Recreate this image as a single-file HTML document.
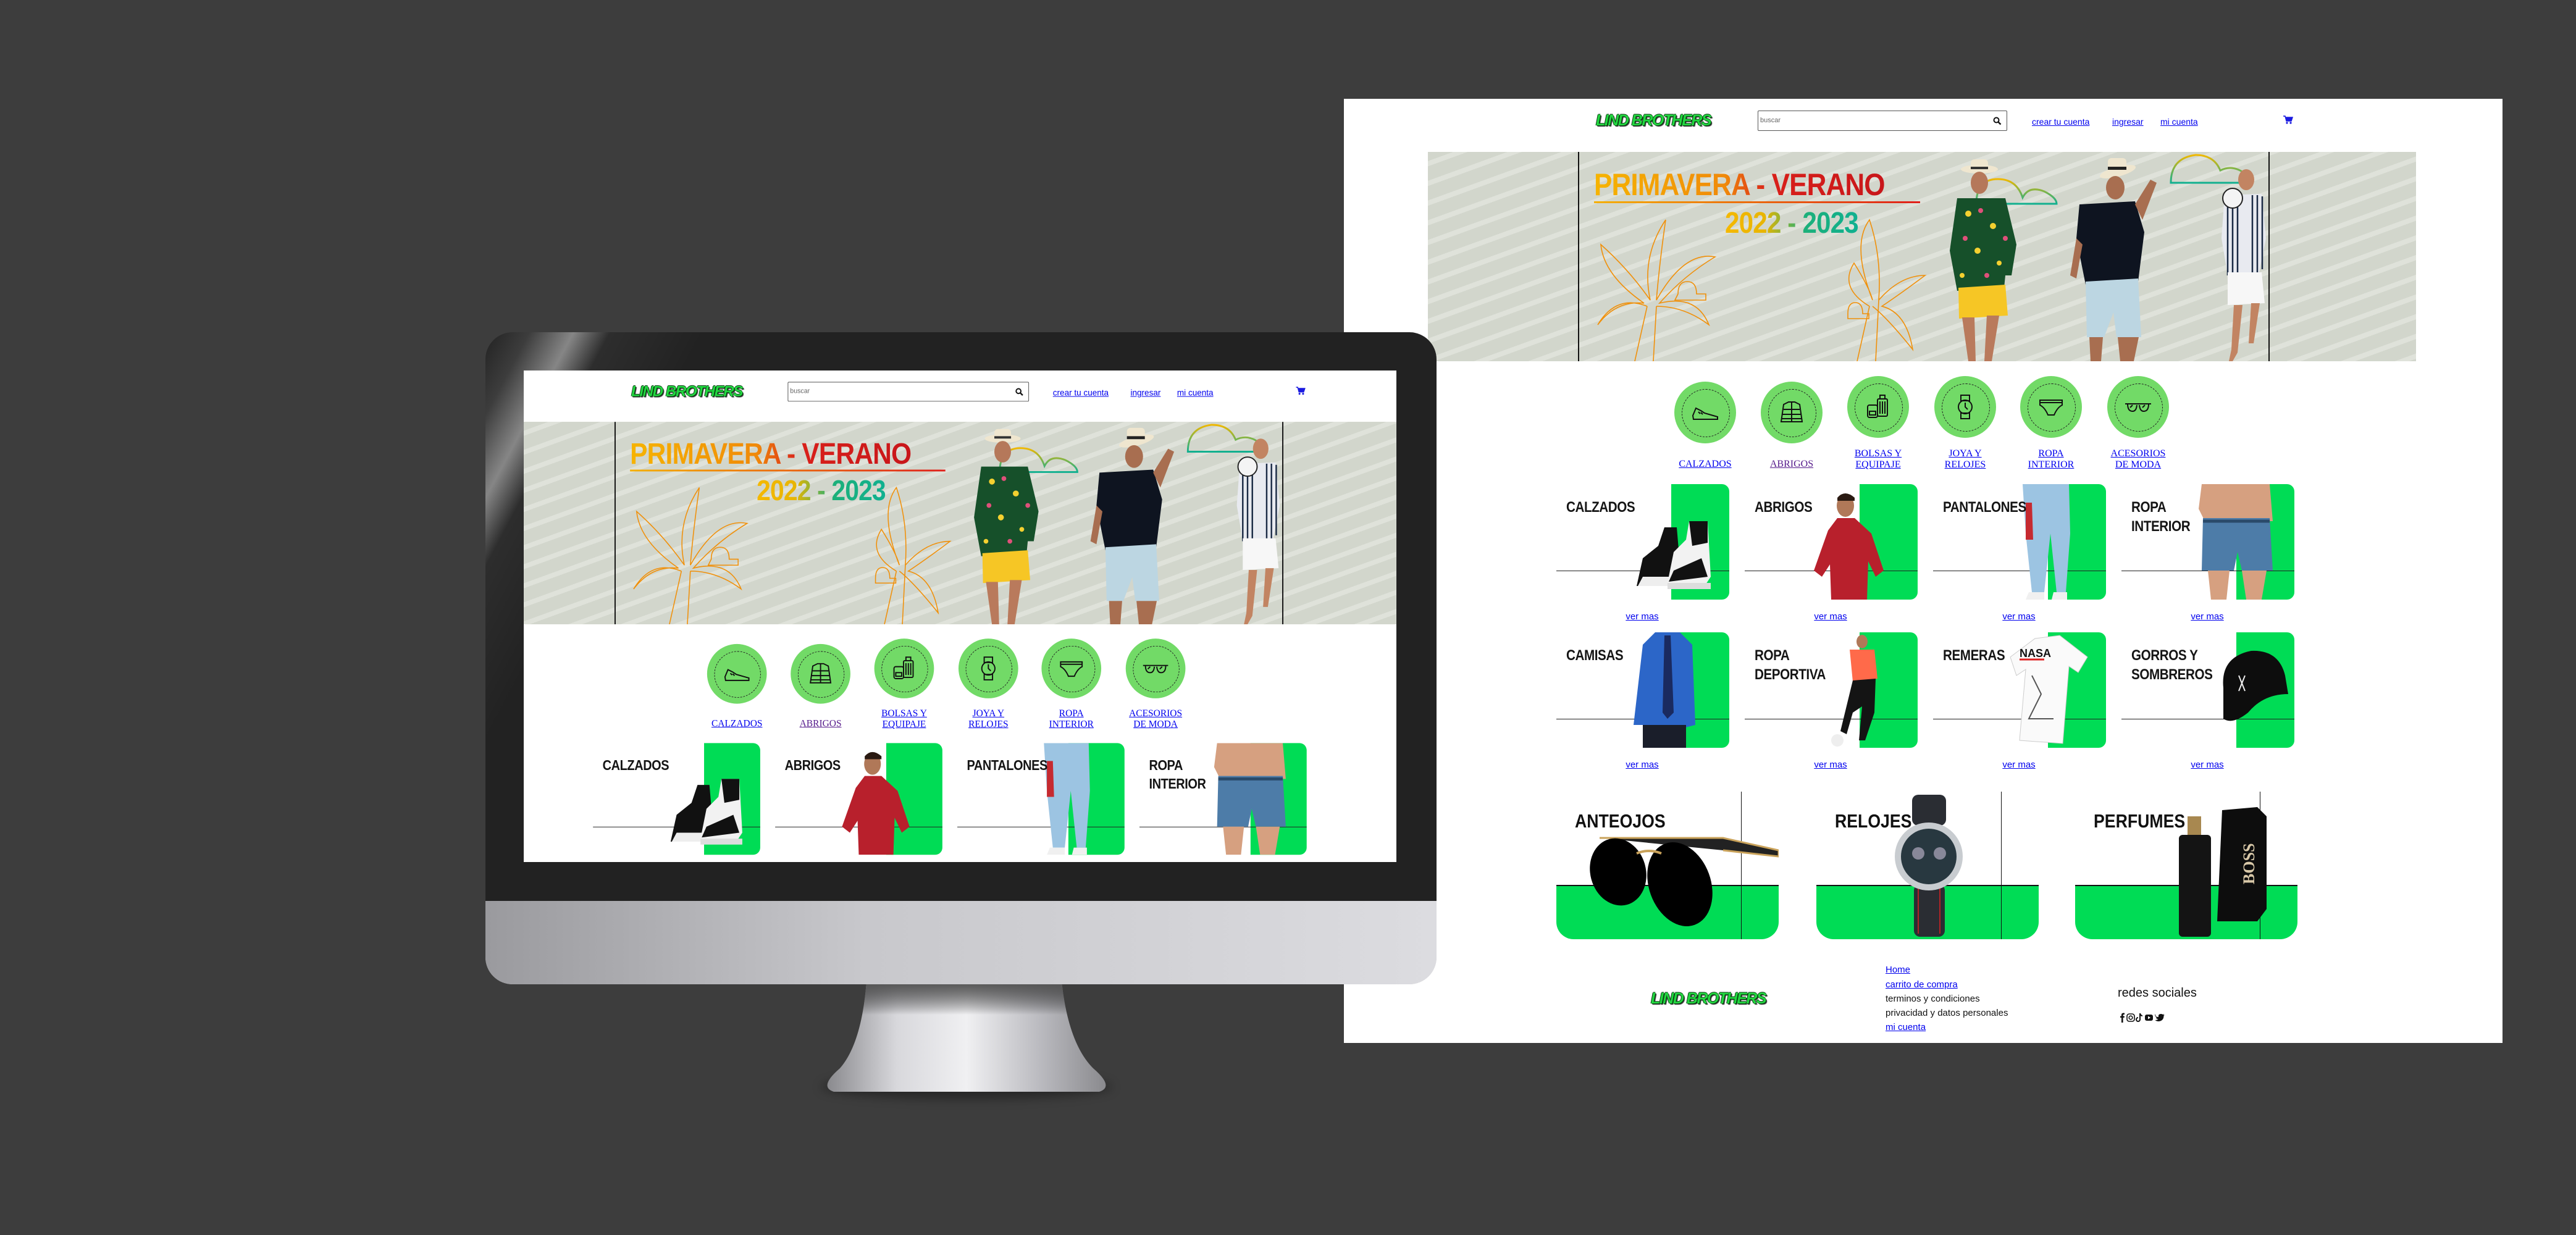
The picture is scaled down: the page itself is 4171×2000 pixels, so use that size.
<!DOCTYPE html>
<html><head><meta charset="utf-8">
<style>
*{margin:0;padding:0;box-sizing:border-box}
body{width:4171px;height:2000px;background:#3d3d3d;position:relative;overflow:hidden;font-family:"Liberation Sans",sans-serif}
.pg{position:absolute;background:#fff;overflow:hidden}
.pg *{position:absolute}
.logo{font-weight:bold;font-style:italic;color:#22d640;font-size:25px;letter-spacing:-1.5px;white-space:nowrap;text-shadow:1px 1px 0 #0a3a12,-1px 0 0 #0a3a12,0 -1px 0 #0a3a12,2px 2px 1px #333}
.srch{border:1px solid #555;border-radius:2px;background:#fff}
.srch span{left:3px;top:9px;font-size:11px;color:#666}
a,.lk{color:#0000ee;text-decoration:underline;white-space:nowrap}
.nav{font-size:14px;top:29px}
.ban{background:#d2d6cc repeating-linear-gradient(160deg,#d2d6cc 0 14px,#dfe2da 14px 22px,#d2d6cc 22px 30px);overflow:hidden}
.inn{top:0;height:100%;width:1120px;border-left:2px solid #111;border-right:2px solid #111}
.ttl{font-weight:bold;font-size:50px;letter-spacing:-1px;white-space:nowrap;background:linear-gradient(90deg,#f6b400,#f08a0a 45%,#d9201a 60%,#c8161a);-webkit-background-clip:text;background-clip:text;color:transparent;transform:scaleX(.88);transform-origin:0 0}
.yr{font-weight:bold;font-size:48px;letter-spacing:-1px;white-space:nowrap;background:linear-gradient(90deg,#f5b800,#e8b500 30%,#1cb07a 60%,#10b090);-webkit-background-clip:text;background-clip:text;color:transparent;transform:scaleX(.88);transform-origin:0 0}
.cir{width:100px;height:100px;border-radius:50%;background:#72da67}
.cir::before{content:"";position:absolute;left:12px;top:12px;width:76px;height:76px;border-radius:50%;border:1.5px dashed #222}
.cir svg{left:25px;top:25px}
.lab{font-family:"Liberation Serif",serif;font-size:16px;line-height:18px;text-align:center;width:120px;color:#0000ee;text-decoration:underline}
.card{width:280px;height:187px}
.card .g{right:0;top:0;width:94px;height:187px;background:#00dc55;border-radius:0 12px 12px 0}
.card .ln{left:0;top:140px;width:280px;height:1px;background:#222}
.card .t{left:16px;top:22px;font-weight:bold;font-size:24px;line-height:31px;color:#151515;letter-spacing:-.5px;white-space:nowrap;transform:scaleX(.86);transform-origin:0 0}
.card svg{left:0;top:0}
.vm{font-size:15px;width:100px;text-align:center}
.big{width:360px;height:239px}
.big .g{left:0;bottom:0;width:360px;height:88px;background:#00dc55;border-radius:0 0 28px 28px;border-top:2px solid #111}
.big .v{left:299px;top:0;width:1px;height:239px;background:#111}
.big .t{left:30px;top:30px;font-weight:bold;font-size:31px;color:#111;white-space:nowrap;transform:scaleX(.86);transform-origin:0 0}
.big svg{left:0;top:0}
.ft{font-size:15px;color:#111;white-space:nowrap}
a.ft{color:#0000ee}
</style></head><body>

<!-- RIGHT PAGE -->
<div class="pg" style="left:2176px;top:160px;width:1876px;height:1529px">
  <div class="logo" style="left:408px;top:21px">LIND BROTHERS</div>
  <div class="srch" style="left:670px;top:19px;width:404px;height:33px"><span>buscar</span>
    <svg style="right:8px;top:9px" width="14" height="14" viewBox="0 0 14 14"><circle cx="5.5" cy="5.5" r="4" fill="none" stroke="#111" stroke-width="2"/><path d="M8.5 8.5l4 4" stroke="#111" stroke-width="2.4"/></svg></div>
  <a class="nav" style="left:1114px">crear tu cuenta</a>
  <a class="nav" style="left:1244px">ingresar</a>
  <a class="nav" style="left:1322px">mi cuenta</a>
  <svg style="left:1521px;top:27px" width="16" height="14" viewBox="0 0 16 14"><path d="M0 1h3l2 8h8l2-6H4" fill="#1a1ae0" stroke="#1a1ae0" stroke-width="1.5"/><circle cx="6" cy="12" r="1.6" fill="#1a1ae0"/><circle cx="12" cy="12" r="1.6" fill="#1a1ae0"/></svg>

  <div class="ban" style="left:136px;top:86px;width:1600px;height:339px">
    <div class="inn" style="left:243px">
      <div class="ttl" style="left:24px;top:24px">PRIMAVERA - VERANO</div>
      <div style="left:24px;top:80px;width:528px;height:3px;background:linear-gradient(90deg,#f5b000,#e01f1a)"></div>
      <div class="yr" style="left:236px;top:88px">2022 - 2023</div>
      <svg style="left:0;top:0" width="1120" height="339" viewBox="0 0 1120 339">
        <g fill="none" stroke="#f0900a" stroke-width="1.6">
          <path d="M90 339 L110 250 M120 339 L125 250 M110 250 Q60 230 30 280 Q60 240 105 245 Q40 200 35 150 Q80 190 115 240 Q100 170 140 110 Q130 180 125 240 Q170 160 220 170 Q170 200 130 245 Q190 230 210 280 Q170 250 125 250"/>
          <path d="M160 230 q0-20 15-20 q15 0 15 20 h15 v10 h-50z"/>
          <path d="M450 339 L470 250 M480 339 L485 240 M470 250 Q420 220 445 180 Q470 220 475 240 Q440 150 470 110 Q490 170 485 240 Q520 200 560 200 Q520 230 490 250 Q530 260 540 320 Q500 270 475 250"/>
          <path d="M435 262 q0-18 12-18 q12 0 12 18 h10 v8 h-34z"/>
        </g>
        <path d="M643 84 q0-40 35-40 q30 0 40 30 q10-20 35-10 q20 10 20 20 v0 h-130z" fill="none" stroke="url(#cg)" stroke-width="3"/>
        <path d="M958 50 q0-40 40-45 q30 0 40 25 q20-10 40 5 q10 10 10 15 h-130z" fill="none" stroke="url(#cg)" stroke-width="3"/>
        <defs><linearGradient id="cg" x1="0" y1="1" x2="0" y2="0"><stop offset="0" stop-color="#10b090"/><stop offset="1" stop-color="#f0b800"/></linearGradient></defs>
        <ellipse cx="648" cy="28" rx="30" ry="7" fill="#efe6cf"/><rect x="634" y="12" width="28" height="16" rx="6" fill="#efe6cf"/><rect x="634" y="24" width="28" height="4" fill="#333"/>
        <ellipse cx="648" cy="50" rx="14" ry="18" fill="#b5785a"/>
        <path d="M612 75 L690 75 L708 150 L700 200 L690 200 L688 220 L612 225 L600 160 Z" fill="#16502a"/>
        <g fill="#f4d030"><circle cx="630" cy="100" r="5"/><circle cx="670" cy="120" r="5"/><circle cx="645" cy="160" r="5"/><circle cx="680" cy="180" r="4"/><circle cx="620" cy="200" r="4"/></g>
        <g fill="#e0507a"><circle cx="650" cy="95" r="4"/><circle cx="625" cy="140" r="4"/><circle cx="690" cy="140" r="4"/><circle cx="660" cy="200" r="4"/></g>
        <path d="M614 220 L690 215 L694 265 L615 270 Z" fill="#f6c625"/>
        <path d="M620 268 L640 268 L642 339 L630 339 Z M660 265 L680 265 L668 339 L656 339 Z" fill="#b97a5c"/>
        <ellipse cx="872" cy="32" rx="30" ry="8" fill="#efe6cf" transform="rotate(-15 872 32)"/><rect x="856" y="10" width="30" height="20" rx="6" fill="#efe6cf"/><rect x="856" y="24" width="30" height="5" fill="#222"/>
        <ellipse cx="868" cy="58" rx="15" ry="19" fill="#a86e50"/>
        <path d="M810 85 L900 80 L915 130 L905 210 L820 215 L805 140 Z" fill="#0e1420"/>
        <path d="M900 85 L925 45 L935 50 L912 110 Z" fill="#a86e50"/>
        <path d="M805 140 L795 200 L805 205 L815 150 Z" fill="#a86e50"/>
        <path d="M820 210 L905 205 L910 300 L870 300 L865 260 L850 300 L822 300 Z" fill="#bcd6e2"/>
        <path d="M826 300 L848 300 L845 339 L828 339 Z M872 300 L906 300 L898 339 L876 339 Z" fill="#a86e50"/>
        <ellipse cx="1080" cy="45" rx="13" ry="17" fill="#c28462"/>
        <path d="M1045 70 L1105 68 L1112 140 L1100 200 L1050 200 L1040 140 Z" fill="#e8eaf0"/>
        <g stroke="#1a2a44" stroke-width="2.5"><path d="M1050 75 V200 M1058 72 V200 M1066 70 V200 M1090 70 V200 M1098 70 V200 M1106 72 V190"/></g>
        <circle cx="1058" cy="75" r="16" fill="#f4f4f4" stroke="#222" stroke-width="2"/>
        <path d="M1050 195 L1105 195 L1110 245 L1050 248 Z" fill="#f7f7f7"/>
        <path d="M1060 248 L1074 248 L1066 325 L1058 339 L1052 339 L1056 320 Z M1088 245 L1102 245 L1092 310 L1084 310 Z" fill="#c28462"/>
      </svg>
    </div>
  </div>

  <div class="cir" style="left:535px;top:458px"><svg width="50" height="50" viewBox="0 0 50 50" fill="none" stroke="#111" stroke-width="2"><path d="M5 30 L10 18 L18 22 L24 26 L38 30 L45 32 L45 36 L6 36 Z M6 36 L45 36"/><path d="M14 24l3 3M18 25l3 3"/></svg></div>
  <div class="cir" style="left:675px;top:458px"><svg width="50" height="50" viewBox="0 0 50 50" fill="none" stroke="#111" stroke-width="2"><path d="M12 12 L20 8 L30 8 L38 12 L42 40 L8 40 Z M25 8 V40 M12 20 H38 M10 28 H40 M9 35 H41"/></svg></div>
  <div class="cir" style="left:815px;top:449px"><svg width="50" height="50" viewBox="0 0 50 50" fill="none" stroke="#111" stroke-width="2"><rect x="24" y="12" width="16" height="28" rx="2"/><path d="M28 12 V6 H36 V12 M28 16 V36 M32 16 V36 M36 16 V36"/><rect x="8" y="22" width="16" height="20" rx="3"/><rect x="11" y="32" width="10" height="6"/></svg></div>
  <div class="cir" style="left:956px;top:449px"><svg width="50" height="50" viewBox="0 0 50 50" fill="none" stroke="#111" stroke-width="2"><rect x="18" y="6" width="14" height="9"/><rect x="18" y="35" width="14" height="9"/><circle cx="25" cy="25" r="11"/><path d="M25 18 V25 L29 29"/></svg></div>
  <div class="cir" style="left:1095px;top:449px"><svg width="50" height="50" viewBox="0 0 50 50" fill="none" stroke="#111" stroke-width="2"><path d="M7 14 H43 V22 Q35 26 30 38 H20 Q15 26 7 22 Z M7 18 H43 M20 14 H30"/></svg></div>
  <div class="cir" style="left:1236px;top:449px"><svg width="50" height="50" viewBox="0 0 50 50" fill="none" stroke="#111" stroke-width="2"><path d="M4 20 H46 M8 20 Q8 32 16 32 Q22 32 23 22 M27 22 Q28 32 34 32 Q42 32 42 20 M12 26l4-4M32 26l4-4"/></svg></div>
  <div class="lab" style="left:525px;top:574px;padding-top:9px">CALZADOS</div>
  <div class="lab" style="left:665px;top:574px;padding-top:9px;color:#551a8b">ABRIGOS</div>
  <div class="lab" style="left:805px;top:566px">BOLSAS Y<br>EQUIPAJE</div>
  <div class="lab" style="left:946px;top:566px">JOYA Y<br>RELOJES</div>
  <div class="lab" style="left:1085px;top:566px">ROPA<br>INTERIOR</div>
  <div class="lab" style="left:1226px;top:566px">ACESORIOS<br>DE MODA</div>

  <div class="card" style="left:344px;top:624px"><div class="g"></div><div class="ln"></div>
    <svg width="280" height="187"><path d="M130 165 L140 120 L165 100 L175 70 L195 70 L200 130 L190 165 Z" fill="#111"/><path d="M140 150 L190 150 L190 165 L132 165 Z" fill="#eee"/><path d="M180 160 L190 110 L210 90 L215 60 L245 60 L250 150 L240 165 Z" fill="#f2f2f2"/><path d="M190 140 L235 120 L245 150 L182 158Z" fill="#111"/><path d="M215 60 L245 60 L245 95 L220 100Z" fill="#111"/><path d="M180 160 L250 160 L250 170 L180 170Z" fill="#ddd"/></svg>
    <div class="t">CALZADOS</div></div>
  <div class="card" style="left:649px;top:624px"><div class="g"></div><div class="ln"></div>
    <svg width="280" height="187"><ellipse cx="163" cy="35" rx="14" ry="18" fill="#b07858"/><path d="M150 22 q12-14 28 0 v5 h-28z" fill="#2a1a12"/><path d="M135 75 L150 55 L178 55 L205 80 L225 140 L212 150 L200 125 L198 187 L140 187 L138 130 L125 150 L112 140 Z" fill="#b8202c"/></svg>
    <div class="t">ABRIGOS</div></div>
  <div class="card" style="left:954px;top:624px"><div class="g"></div><div class="ln"></div>
    <svg width="280" height="187"><path d="M145 0 L220 0 L222 80 L215 175 L200 175 L190 80 L180 175 L160 175 L150 80 Z" fill="#9cc4e2"/><path d="M150 30 L160 30 L162 90 L150 90Z" fill="#c62a30"/><path d="M155 175 h25 v12 h-30z M195 175 h22 v12 h-25z" fill="#f0f0f0"/></svg>
    <div class="t">PANTALONES</div></div>
  <div class="card" style="left:1259px;top:624px"><div class="g"></div><div class="ln"></div>
    <svg width="280" height="187"><path d="M130 0 L240 0 L245 60 L230 60 L135 60 L125 40 Z" fill="#d6a080"/><path d="M132 55 L240 55 L245 140 L195 140 L188 110 L182 140 L130 140 Z" fill="#4d7ca8"/><path d="M132 60 H240" stroke="#2a4a6a" stroke-width="5"/><path d="M140 140 h35 l-5 47 h-25z M195 140 h40 l-8 47 h-25z" fill="#d6a080"/></svg>
    <div class="t">ROPA<br>INTERIOR</div></div>
  <div class="card" style="left:344px;top:864px"><div class="g"></div><div class="ln"></div>
    <svg width="280" height="187"><path d="M140 20 L160 0 L200 0 L220 20 L225 150 L205 155 L200 187 L150 187 L140 150 L125 150 Z" fill="#2c66c8"/><path d="M175 5 L185 5 L190 130 L180 140 L172 130 Z" fill="#1a2a60"/><rect x="140" y="150" width="70" height="37" fill="#1a1e2a"/></svg>
    <div class="t">CAMISAS</div></div>
  <div class="card" style="left:649px;top:864px"><div class="g"></div><div class="ln"></div>
    <svg width="280" height="187"><ellipse cx="190" cy="15" rx="9" ry="11" fill="#b07858"/><path d="M170 28 L210 28 L215 75 L175 80 Z" fill="#ff6a4a"/><path d="M175 78 L212 75 L210 130 L195 175 L185 175 L190 120 L175 130 L165 165 L155 160 Z" fill="#141414"/><circle cx="150" cy="175" r="10" fill="#eee"/></svg>
    <div class="t">ROPA<br>DEPORTIVA</div></div>
  <div class="card" style="left:954px;top:864px"><div class="g"></div><div class="ln"></div>
    <svg width="280" height="187"><path d="M165 10 L205 5 L250 40 L235 65 L220 55 L210 180 L140 175 L150 60 L135 70 L125 40 Z" fill="#fafafa" stroke="#ccc"/><text x="140" y="40" font-family="Liberation Sans" font-weight="bold" font-size="18" fill="#111">NASA</text><path d="M140 44 h40" stroke="#d22" stroke-width="3"/><path d="M160 70 l15 30 l-20 40 h40" stroke="#555" fill="none" stroke-width="2"/></svg>
    <div class="t">REMERAS</div></div>
  <div class="card" style="left:1259px;top:864px"><div class="g"></div><div class="ln"></div>
    <svg width="280" height="187"><path d="M165 90 Q160 40 210 30 Q255 28 265 70 L270 100 Q230 100 205 130 Q180 150 165 140 Z" fill="#0d0d0d"/><path d="M190 70 l10 25 M200 70 l-10 25" stroke="#eee" stroke-width="2"/></svg>
    <div class="t">GORROS Y<br>SOMBREROS</div></div>
  <a class="vm" style="left:433px;top:830px">ver mas</a>
  <a class="vm" style="left:738px;top:830px">ver mas</a>
  <a class="vm" style="left:1043px;top:830px">ver mas</a>
  <a class="vm" style="left:1348px;top:830px">ver mas</a>
  <a class="vm" style="left:433px;top:1070px">ver mas</a>
  <a class="vm" style="left:738px;top:1070px">ver mas</a>
  <a class="vm" style="left:1043px;top:1070px">ver mas</a>
  <a class="vm" style="left:1348px;top:1070px">ver mas</a>

  <div class="big" style="left:344px;top:1122px"><div class="g"></div><div class="v"></div>
    <svg width="360" height="239"><path d="M70 75 L270 75 L360 95 L360 105 L270 95" fill="#222" stroke="#c9a25a" stroke-width="3"/><ellipse cx="100" cy="130" rx="45" ry="55" fill="#000" transform="rotate(-15 100 130)"/><ellipse cx="200" cy="150" rx="50" ry="70" fill="#000" transform="rotate(-20 200 150)"/><path d="M130 100 q20-8 40 0" stroke="#c9a25a" stroke-width="4" fill="none"/></svg>
    <div class="t">ANTEOJOS</div></div>
  <div class="big" style="left:765px;top:1122px"><div class="g"></div><div class="v"></div>
    <svg width="360" height="239"><rect x="155" y="5" width="55" height="50" rx="10" fill="#2a2d33"/><rect x="158" y="150" width="50" height="85" rx="10" fill="#2a2d33"/><path d="M165 150 v80 M200 150 v80" stroke="#d22" stroke-width="1.5"/><circle cx="182" cy="105" r="55" fill="#c8ccd0"/><circle cx="182" cy="105" r="45" fill="#283840"/><circle cx="165" cy="100" r="10" fill="#889"/><circle cx="200" cy="100" r="10" fill="#889"/></svg>
    <div class="t">RELOJES</div></div>
  <div class="big" style="left:1184px;top:1122px"><div class="g"></div><div class="v"></div>
    <svg width="360" height="239"><path d="M238 30 L295 25 L310 40 L310 190 L295 210 L230 210 Z" fill="#0d0d0d"/><text x="290" y="150" font-family="Liberation Serif" font-weight="bold" font-size="26" fill="#d8c8a8" transform="rotate(-90 290 150)">BOSS</text><rect x="182" y="40" width="22" height="30" fill="#a88850"/><rect x="168" y="70" width="52" height="165" rx="6" fill="#141414"/></svg>
    <div class="t">PERFUMES</div></div>

  <div class="logo" style="left:497px;top:1443px">LIND BROTHERS</div>
  <a class="ft" style="left:877px;top:1402px">Home</a>
  <a class="ft" style="left:877px;top:1426px">carrito de compra</a>
  <div class="ft" style="left:877px;top:1449px">terminos y condiciones</div>
  <div class="ft" style="left:877px;top:1472px">privacidad y datos personales</div>
  <a class="ft" style="left:877px;top:1495px">mi cuenta</a>
  <div style="left:1253px;top:1437px;font-size:20px;color:#111;white-space:nowrap">redes sociales</div>
  <svg style="left:1255px;top:1480px" width="90" height="16" viewBox="0 0 90 16"><path d="M4 16V8H2V5.5h2V3.5Q4 0.5 7 0.5H9V3H7.5Q6.6 3 6.6 4V5.5H9L8.6 8H6.6V16Z" fill="#111"/><rect x="13" y="2" width="12" height="12" rx="3.5" fill="none" stroke="#111" stroke-width="1.6"/><circle cx="19" cy="8" r="2.8" fill="none" stroke="#111" stroke-width="1.6"/><path d="M34 1v10a3 3 0 1 1-3-3M34 1q1 4 4 4" fill="none" stroke="#111" stroke-width="2"/><rect x="42" y="3" width="13" height="10" rx="3" fill="#111"/><path d="M47 5.5v5l4-2.5z" fill="#fff"/><path d="M58 4q2 3 6 3q-1-5 4-5q2 0 3 1l2-1-1 2 2-.5-1.5 1.5q0 8-8 9-4 0-6-2 3 0 5-1.5-3-.5-3.5-2.5h1.5q-3-1-3-3.5 1 .5 1.5.5-2-2-1-4z" fill="#111"/></svg>
</div>

<!-- MONITOR -->
<div style="position:absolute;left:1330px;top:1740px;width:470px;height:40px;border-radius:50%;background:rgba(0,0,0,.35);filter:blur(8px)"></div>
<svg style="position:absolute;left:1300px;top:1590px" width="530" height="185" viewBox="0 0 530 185"><defs><linearGradient id="st" x1="0" x2="1"><stop offset="0" stop-color="#8a8a8e"/><stop offset=".25" stop-color="#d8d8dc"/><stop offset=".5" stop-color="#f0f0f2"/><stop offset=".75" stop-color="#bdbdc2"/><stop offset="1" stop-color="#8a8a8e"/></linearGradient><linearGradient id="st2" x1="0" y1="0" x2="0" y2="1"><stop offset="0" stop-color="#555"/><stop offset=".3" stop-color="rgba(0,0,0,0)"/></linearGradient></defs>
<path d="M103 0 L419 0 Q430 100 470 140 Q505 170 480 178 L50 178 Q25 170 60 140 Q95 100 103 0Z" fill="url(#st)"/><path d="M103 0 L419 0 Q430 100 470 140 Q505 170 480 178 L50 178 Q25 170 60 140 Q95 100 103 0Z" fill="url(#st2)"/></svg>
<div style="position:absolute;left:786px;top:538px;width:1540px;height:1056px;border-radius:44px;background:linear-gradient(180deg,#222 0,#222 921px,#b0b0b4 921px,#d0d0d4 100%);overflow:hidden">
  <div style="position:absolute;left:0;top:0;width:700px;height:921px;background:linear-gradient(118deg,rgba(255,255,255,0) 0,rgba(255,255,255,.12) 6%,rgba(255,255,255,.45) 12%,rgba(255,255,255,.05) 17%,rgba(255,255,255,0) 30%)"></div>
  <div style="position:absolute;left:0;top:921px;width:1540px;height:135px;background:linear-gradient(90deg,#9a9a9e,#c8c8cc 40%,#dcdce0 100%)"></div>
</div>

<!-- SCREEN -->
<div style="position:absolute;left:848px;top:600px;width:1413px;height:796px;background:#fff;overflow:hidden">
<div class="pg" style="left:0;top:0;width:1461px;height:823px;transform:scale(.967);transform-origin:0 0;background:#fff">
<div class="pg" style="left:-228px;top:0;width:1876px;height:823px">
  <div class="logo" style="left:408px;top:21px">LIND BROTHERS</div>
  <div class="srch" style="left:670px;top:19px;width:404px;height:33px"><span>buscar</span>
    <svg style="right:8px;top:9px" width="14" height="14" viewBox="0 0 14 14"><circle cx="5.5" cy="5.5" r="4" fill="none" stroke="#111" stroke-width="2"/><path d="M8.5 8.5l4 4" stroke="#111" stroke-width="2.4"/></svg></div>
  <a class="nav" style="left:1114px">crear tu cuenta</a>
  <a class="nav" style="left:1244px">ingresar</a>
  <a class="nav" style="left:1322px">mi cuenta</a>
  <svg style="left:1521px;top:27px" width="16" height="14" viewBox="0 0 16 14"><path d="M0 1h3l2 8h8l2-6H4" fill="#1a1ae0" stroke="#1a1ae0" stroke-width="1.5"/><circle cx="6" cy="12" r="1.6" fill="#1a1ae0"/><circle cx="12" cy="12" r="1.6" fill="#1a1ae0"/></svg>

  <div class="ban" style="left:228px;top:86px;width:1461px;height:339px">
    <div class="inn" style="left:152px">
      <div class="ttl" style="left:24px;top:24px">PRIMAVERA - VERANO</div>
      <div style="left:24px;top:80px;width:528px;height:3px;background:linear-gradient(90deg,#f5b000,#e01f1a)"></div>
      <div class="yr" style="left:236px;top:88px">2022 - 2023</div>
      <svg style="left:0;top:0" width="1120" height="339" viewBox="0 0 1120 339">
        <g fill="none" stroke="#f0900a" stroke-width="1.6">
          <path d="M90 339 L110 250 M120 339 L125 250 M110 250 Q60 230 30 280 Q60 240 105 245 Q40 200 35 150 Q80 190 115 240 Q100 170 140 110 Q130 180 125 240 Q170 160 220 170 Q170 200 130 245 Q190 230 210 280 Q170 250 125 250"/>
          <path d="M160 230 q0-20 15-20 q15 0 15 20 h15 v10 h-50z"/>
          <path d="M450 339 L470 250 M480 339 L485 240 M470 250 Q420 220 445 180 Q470 220 475 240 Q440 150 470 110 Q490 170 485 240 Q520 200 560 200 Q520 230 490 250 Q530 260 540 320 Q500 270 475 250"/>
          <path d="M435 262 q0-18 12-18 q12 0 12 18 h10 v8 h-34z"/>
        </g>
        <path d="M643 84 q0-40 35-40 q30 0 40 30 q10-20 35-10 q20 10 20 20 v0 h-130z" fill="none" stroke="url(#cg)" stroke-width="3"/>
        <path d="M958 50 q0-40 40-45 q30 0 40 25 q20-10 40 5 q10 10 10 15 h-130z" fill="none" stroke="url(#cg)" stroke-width="3"/>
        <ellipse cx="648" cy="28" rx="30" ry="7" fill="#efe6cf"/><rect x="634" y="12" width="28" height="16" rx="6" fill="#efe6cf"/><rect x="634" y="24" width="28" height="4" fill="#333"/>
        <ellipse cx="648" cy="50" rx="14" ry="18" fill="#b5785a"/>
        <path d="M612 75 L690 75 L708 150 L700 200 L690 200 L688 220 L612 225 L600 160 Z" fill="#16502a"/>
        <g fill="#f4d030"><circle cx="630" cy="100" r="5"/><circle cx="670" cy="120" r="5"/><circle cx="645" cy="160" r="5"/><circle cx="680" cy="180" r="4"/><circle cx="620" cy="200" r="4"/></g>
        <g fill="#e0507a"><circle cx="650" cy="95" r="4"/><circle cx="625" cy="140" r="4"/><circle cx="690" cy="140" r="4"/><circle cx="660" cy="200" r="4"/></g>
        <path d="M614 220 L690 215 L694 265 L615 270 Z" fill="#f6c625"/>
        <path d="M620 268 L640 268 L642 339 L630 339 Z M660 265 L680 265 L668 339 L656 339 Z" fill="#b97a5c"/>
        <ellipse cx="872" cy="32" rx="30" ry="8" fill="#efe6cf" transform="rotate(-15 872 32)"/><rect x="856" y="10" width="30" height="20" rx="6" fill="#efe6cf"/><rect x="856" y="24" width="30" height="5" fill="#222"/>
        <ellipse cx="868" cy="58" rx="15" ry="19" fill="#a86e50"/>
        <path d="M810 85 L900 80 L915 130 L905 210 L820 215 L805 140 Z" fill="#0e1420"/>
        <path d="M900 85 L925 45 L935 50 L912 110 Z" fill="#a86e50"/>
        <path d="M805 140 L795 200 L805 205 L815 150 Z" fill="#a86e50"/>
        <path d="M820 210 L905 205 L910 300 L870 300 L865 260 L850 300 L822 300 Z" fill="#bcd6e2"/>
        <path d="M826 300 L848 300 L845 339 L828 339 Z M872 300 L906 300 L898 339 L876 339 Z" fill="#a86e50"/>
        <ellipse cx="1080" cy="45" rx="13" ry="17" fill="#c28462"/>
        <path d="M1045 70 L1105 68 L1112 140 L1100 200 L1050 200 L1040 140 Z" fill="#e8eaf0"/>
        <g stroke="#1a2a44" stroke-width="2.5"><path d="M1050 75 V200 M1058 72 V200 M1066 70 V200 M1090 70 V200 M1098 70 V200 M1106 72 V190"/></g>
        <circle cx="1058" cy="75" r="16" fill="#f4f4f4" stroke="#222" stroke-width="2"/>
        <path d="M1050 195 L1105 195 L1110 245 L1050 248 Z" fill="#f7f7f7"/>
        <path d="M1060 248 L1074 248 L1066 325 L1058 339 L1052 339 L1056 320 Z M1088 245 L1102 245 L1092 310 L1084 310 Z" fill="#c28462"/>
      </svg>
    </div>
  </div>

  <div class="cir" style="left:535px;top:458px"><svg width="50" height="50" viewBox="0 0 50 50" fill="none" stroke="#111" stroke-width="2"><path d="M5 30 L10 18 L18 22 L24 26 L38 30 L45 32 L45 36 L6 36 Z M6 36 L45 36"/><path d="M14 24l3 3M18 25l3 3"/></svg></div>
  <div class="cir" style="left:675px;top:458px"><svg width="50" height="50" viewBox="0 0 50 50" fill="none" stroke="#111" stroke-width="2"><path d="M12 12 L20 8 L30 8 L38 12 L42 40 L8 40 Z M25 8 V40 M12 20 H38 M10 28 H40 M9 35 H41"/></svg></div>
  <div class="cir" style="left:815px;top:449px"><svg width="50" height="50" viewBox="0 0 50 50" fill="none" stroke="#111" stroke-width="2"><rect x="24" y="12" width="16" height="28" rx="2"/><path d="M28 12 V6 H36 V12 M28 16 V36 M32 16 V36 M36 16 V36"/><rect x="8" y="22" width="16" height="20" rx="3"/><rect x="11" y="32" width="10" height="6"/></svg></div>
  <div class="cir" style="left:956px;top:449px"><svg width="50" height="50" viewBox="0 0 50 50" fill="none" stroke="#111" stroke-width="2"><rect x="18" y="6" width="14" height="9"/><rect x="18" y="35" width="14" height="9"/><circle cx="25" cy="25" r="11"/><path d="M25 18 V25 L29 29"/></svg></div>
  <div class="cir" style="left:1095px;top:449px"><svg width="50" height="50" viewBox="0 0 50 50" fill="none" stroke="#111" stroke-width="2"><path d="M7 14 H43 V22 Q35 26 30 38 H20 Q15 26 7 22 Z M7 18 H43 M20 14 H30"/></svg></div>
  <div class="cir" style="left:1236px;top:449px"><svg width="50" height="50" viewBox="0 0 50 50" fill="none" stroke="#111" stroke-width="2"><path d="M4 20 H46 M8 20 Q8 32 16 32 Q22 32 23 22 M27 22 Q28 32 34 32 Q42 32 42 20 M12 26l4-4M32 26l4-4"/></svg></div>
  <div class="lab" style="left:525px;top:574px;padding-top:9px">CALZADOS</div>
  <div class="lab" style="left:665px;top:574px;padding-top:9px;color:#551a8b">ABRIGOS</div>
  <div class="lab" style="left:805px;top:566px">BOLSAS Y<br>EQUIPAJE</div>
  <div class="lab" style="left:946px;top:566px">JOYA Y<br>RELOJES</div>
  <div class="lab" style="left:1085px;top:566px">ROPA<br>INTERIOR</div>
  <div class="lab" style="left:1226px;top:566px">ACESORIOS<br>DE MODA</div>

  <div class="card" style="left:344px;top:624px"><div class="g"></div><div class="ln"></div>
    <svg width="280" height="187"><path d="M130 165 L140 120 L165 100 L175 70 L195 70 L200 130 L190 165 Z" fill="#111"/><path d="M140 150 L190 150 L190 165 L132 165 Z" fill="#eee"/><path d="M180 160 L190 110 L210 90 L215 60 L245 60 L250 150 L240 165 Z" fill="#f2f2f2"/><path d="M190 140 L235 120 L245 150 L182 158Z" fill="#111"/><path d="M215 60 L245 60 L245 95 L220 100Z" fill="#111"/><path d="M180 160 L250 160 L250 170 L180 170Z" fill="#ddd"/></svg>
    <div class="t">CALZADOS</div></div>
  <div class="card" style="left:649px;top:624px"><div class="g"></div><div class="ln"></div>
    <svg width="280" height="187"><ellipse cx="163" cy="35" rx="14" ry="18" fill="#b07858"/><path d="M150 22 q12-14 28 0 v5 h-28z" fill="#2a1a12"/><path d="M135 75 L150 55 L178 55 L205 80 L225 140 L212 150 L200 125 L198 187 L140 187 L138 130 L125 150 L112 140 Z" fill="#b8202c"/></svg>
    <div class="t">ABRIGOS</div></div>
  <div class="card" style="left:954px;top:624px"><div class="g"></div><div class="ln"></div>
    <svg width="280" height="187"><path d="M145 0 L220 0 L222 80 L215 175 L200 175 L190 80 L180 175 L160 175 L150 80 Z" fill="#9cc4e2"/><path d="M150 30 L160 30 L162 90 L150 90Z" fill="#c62a30"/><path d="M155 175 h25 v12 h-30z M195 175 h22 v12 h-25z" fill="#f0f0f0"/></svg>
    <div class="t">PANTALONES</div></div>
  <div class="card" style="left:1259px;top:624px"><div class="g"></div><div class="ln"></div>
    <svg width="280" height="187"><path d="M130 0 L240 0 L245 60 L230 60 L135 60 L125 40 Z" fill="#d6a080"/><path d="M132 55 L240 55 L245 140 L195 140 L188 110 L182 140 L130 140 Z" fill="#4d7ca8"/><path d="M132 60 H240" stroke="#2a4a6a" stroke-width="5"/><path d="M140 140 h35 l-5 47 h-25z M195 140 h40 l-8 47 h-25z" fill="#d6a080"/></svg>
    <div class="t">ROPA<br>INTERIOR</div></div>
</div>
</div>
</div>
</body></html>
